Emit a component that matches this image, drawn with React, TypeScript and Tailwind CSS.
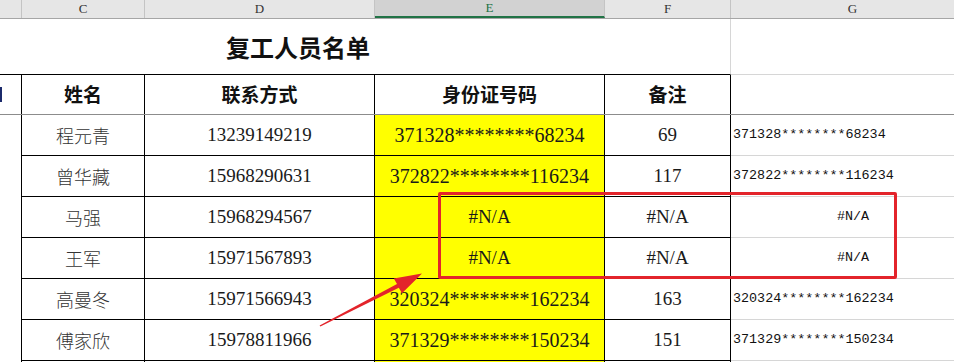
const rows = [
  { name: "程元青", phone: "13239149219", id: "371328********68234", note: "69", g: "371328********68234" },
  { name: "曾华藏", phone: "15968290631", id: "372822********116234", note: "117", g: "372822********116234" },
  { name: "马强", phone: "15968294567", id: "#N/A", note: "#N/A", g: "#N/A" },
  { name: "王军", phone: "15971567893", id: "#N/A", note: "#N/A", g: "#N/A" },
  { name: "高曼冬", phone: "15971566943", id: "320324********162234", note: "163", g: "320324********162234" },
  { name: "傅家欣", phone: "15978811966", id: "371329********150234", note: "151", g: "371329********150234" },
];

const serif = "font-['Liberation_Serif',serif]";
const cjk = "font-['Noto_Sans_CJK_SC',sans-serif]";
const mono = "font-['Liberation_Mono',monospace]";

function ColHead({ label, w, active }: { label: string; w: string; active?: boolean }) {
  return (
    <div
      className={`${w} h-full flex items-center justify-center border-r border-[#c4c4c4] text-[13px] ${serif} ${
        active ? "bg-[#d2d2d2] text-[#217346] border-b-2 border-b-[#217346]" : "text-[#333]"
      }`}
    >
      {label}
    </div>
  );
}

function DataRow({ r }: { r: (typeof rows)[number] }) {
  const na = r.id === "#N/A";
  return (
    <div className="flex h-[41px] shrink-0">
      <div className="w-[22px] border-r border-black" />
      <div className={`w-[123px] flex items-center justify-center border-r border-b border-black text-[18px] font-light text-[#333] ${cjk}`}>
        {r.name}
      </div>
      <div className={`w-[230px] flex items-center justify-center border-r border-b border-black text-[19px] text-[#1a1a1a] ${serif}`}>
        {r.phone}
      </div>
      <div
        className={`w-[230px] flex items-center justify-center border-r border-b border-black bg-[#ffff00] text-[#1a1a1a] ${serif} ${
          na ? "text-[19px]" : "text-[20px]"
        }`}
      >
        {r.id}
      </div>
      <div className={`w-[126px] flex items-center justify-center border-r border-b border-black text-[19px] text-[#1a1a1a] ${serif}`}>
        {r.note}
      </div>
      <div
        className={`w-[244px] flex items-center border-b border-[#d6d6d6] text-[13.4px] text-[#111] ${mono} ${
          na ? "justify-center" : "justify-start pl-[2px]"
        }`}
      >
        {r.g}
      </div>
    </div>
  );
}

export default function App() {
  return (
    <div className="relative w-[954px] h-[362px] overflow-hidden bg-white">
      <div className="flex flex-col w-[975px]">
        {/* column letters */}
        <div className="flex h-[19px] shrink-0 bg-[#e6e6e6] border-b border-[#a6a6a6]">
          <ColHead label="" w="w-[22px]" />
          <ColHead label="C" w="w-[123px]" />
          <ColHead label="D" w="w-[230px]" />
          <ColHead label="E" w="w-[230px]" active />
          <ColHead label="F" w="w-[126px]" />
          <ColHead label="G" w="w-[244px]" />
        </div>

        {/* title */}
        <div className="flex h-[56px] shrink-0">
          <div className="w-[22px] border-b border-black" />
          <div className={`w-[709px] flex items-center pl-[204px] border-r border-[#d6d6d6] border-b border-b-black text-[24px] font-bold text-[#111] ${cjk}`}>
            复工人员名单
          </div>
          <div className="w-[244px] border-b border-[#d6d6d6]" />
        </div>

        {/* header */}
        <div className="flex h-[40px] shrink-0 border-b border-[#8c8c8c]">
          <div className="w-[22px] border-r border-black flex items-center">
            {/* edge of the neighbouring column's heading */}
            <div className="w-[2px] h-[15px] bg-[#1b2a6b]" />
          </div>
          {[
            ["姓名", "w-[123px]"],
            ["联系方式", "w-[230px]"],
            ["身份证号码", "w-[230px]"],
            ["备注", "w-[126px]"],
          ].map(([t, w]) => (
            <div key={t} className={`${w} flex items-center justify-center border-r border-black text-[19px] font-bold text-[#111] ${cjk}`}>
              {t}
            </div>
          ))}
          <div className="w-[244px]" />
        </div>

        {rows.map((r) => (
          <DataRow key={r.name} r={r} />
        ))}

        {/* partial next row */}
        <div className="flex h-[20px] shrink-0">
          <div className="w-[22px] border-r border-black" />
          <div className="w-[123px] border-r border-black" />
          <div className="w-[230px] border-r border-black" />
          <div className="w-[230px] border-r border-black bg-[#ffff00]" />
          <div className="w-[126px] border-r border-black" />
          <div className="w-[244px]" />
        </div>
      </div>

      {/* annotation: red box */}
      <div className="absolute left-[438px] top-[192px] w-[459px] h-[87px] border-[3px] border-[#e3242b] rounded-[2px]" />

      {/* annotation: arrow */}
      <svg className="absolute inset-0 pointer-events-none" width="954" height="362" viewBox="0 0 954 362">
        <polygon
          points="319.6,325.4 397,284.1 393.8,278.6 422,273.5 402,293.2 398.8,287.7 320.4,326.6"
          fill="#e3242b"
        />
      </svg>
    </div>
  );
}
